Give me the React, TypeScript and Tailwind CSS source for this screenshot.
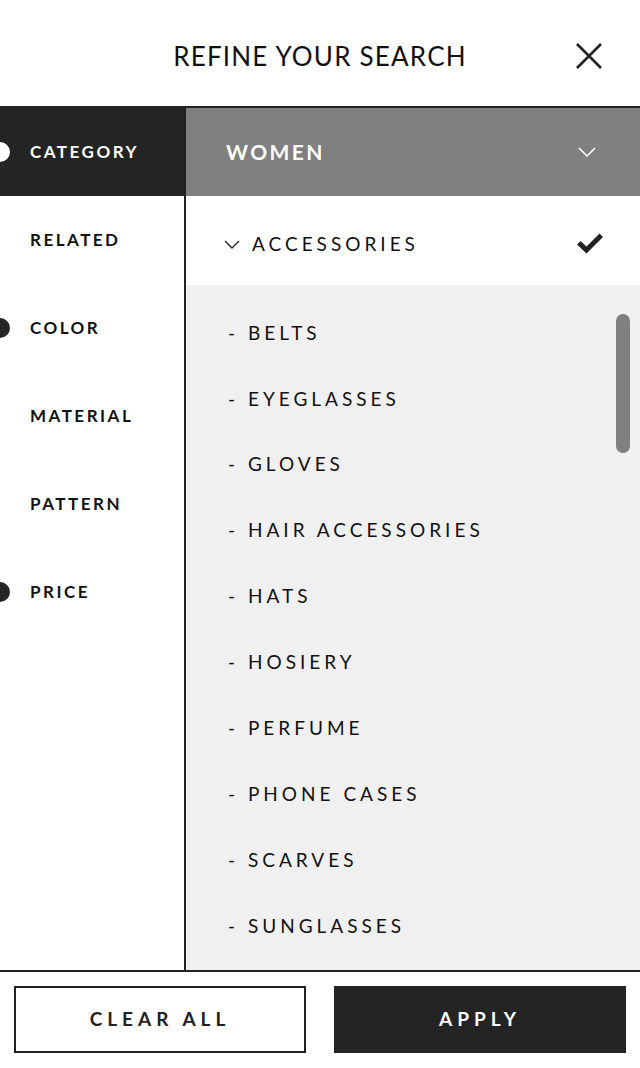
import { useState } from "react"

const sections = [
  { name: "CATEGORY", dot: true },
  { name: "RELATED", dot: false },
  { name: "COLOR", dot: true },
  { name: "MATERIAL", dot: false },
  { name: "PATTERN", dot: false },
  { name: "PRICE", dot: true },
]

const items = [
  "BELTS",
  "EYEGLASSES",
  "GLOVES",
  "HAIR ACCESSORIES",
  "HATS",
  "HOSIERY",
  "PERFUME",
  "PHONE CASES",
  "SCARVES",
  "SUNGLASSES",
]

export default function App() {
  const [active, setActive] = useState(0)

  return (
    <div className="w-[640px] h-[1068px] bg-white flex flex-col overflow-hidden text-[#111] font-['Lato','Noto_Sans',sans-serif]">
      {/* header */}
      <div className="h-[106px] shrink-0 relative flex items-center justify-center">
        <h1 className="text-[26px] tracking-[1.2px] font-normal pt-[6px]">REFINE YOUR SEARCH</h1>
        <button className="absolute right-[38px] top-[43px] w-[26px] h-[26px]">
          <svg viewBox="0 0 26 26" className="w-full h-full" fill="none" stroke="#222" strokeWidth="2.6">
            <path d="M1 1L25 25M25 1L1 25" />
          </svg>
        </button>
      </div>

      <div className="flex-1 flex border-t-2 border-b-2 border-[#222] min-h-0">
        {/* left column */}
        <div className="w-[186px] shrink-0 border-r-2 border-[#222]">
          {sections.map((s, i) => (
            <button
              key={s.name}
              onClick={() => setActive(i)}
              className={`relative w-full h-[88px] flex items-center pl-[30px] text-[17px] font-bold tracking-[2.5px] ${
                i === active ? "bg-[#242424] text-white" : "text-[#111]"
              }`}
            >
              {s.dot && (
                <span
                  className={`absolute left-[-10px] top-1/2 -translate-y-1/2 w-[20px] h-[20px] rounded-full ${
                    i === active ? "bg-white" : "bg-[#242424]"
                  }`}
                />
              )}
              {s.name}
            </button>
          ))}
        </div>

        {/* right column */}
        <div className="flex-1 flex flex-col min-w-0">
          <div className="h-[88px] shrink-0 bg-[#808080] flex items-center justify-between pl-[40px] pr-[44px] text-white">
            <span className="text-[21px] font-bold tracking-[2.4px]">WOMEN</span>
            <svg viewBox="0 0 18 10" className="w-[18px] h-[10px]" fill="none" stroke="#fff" strokeWidth="1.6">
              <path d="M1 1L9 9L17 1" />
            </svg>
          </div>
          <div className="h-[89px] shrink-0 bg-white flex items-center justify-between pl-[38px] pr-[36px]">
            <div className="flex items-center pt-[8px]">
              <svg viewBox="0 0 16 9" className="w-[16px] h-[9px] mr-[12px]" fill="none" stroke="#222" strokeWidth="1.4">
                <path d="M1 1L8 8L15 1" />
              </svg>
              <span className="text-[19px] tracking-[4px]">ACCESSORIES</span>
            </div>
            <svg viewBox="0 0 28 22" className="w-[28px] h-[22px] mt-[4px]" fill="#222">
              <path d="M1 12.5L4.5 9L10.5 14.5L23.5 1.5L27 5L10.5 21.5Z" />
            </svg>
          </div>
          <div className="flex-1 bg-[#f0f0f0] relative overflow-hidden">
            <ul className="pt-[15px] pl-[42px]">
              {items.map((it) => (
                <li key={it} className="h-[65.9px] flex items-center text-[19px] tracking-[4px]">
                  - {it}
                </li>
              ))}
            </ul>
            <div className="absolute right-[10px] top-[29px] w-[14px] h-[139px] rounded-full bg-[#808080]" />
          </div>
        </div>
      </div>

      {/* footer */}
      <div className="h-[96px] shrink-0 flex items-center pl-[14px] gap-[28px] pb-[2px]">
        <button className="w-[292px] h-[67px] border-2 border-[#222] text-[19px] font-bold tracking-[5px] text-[#222]">
          CLEAR ALL
        </button>
        <button className="w-[292px] h-[67px] bg-[#242424] text-[19px] font-bold tracking-[5px] text-white">
          APPLY
        </button>
      </div>
    </div>
  )
}
